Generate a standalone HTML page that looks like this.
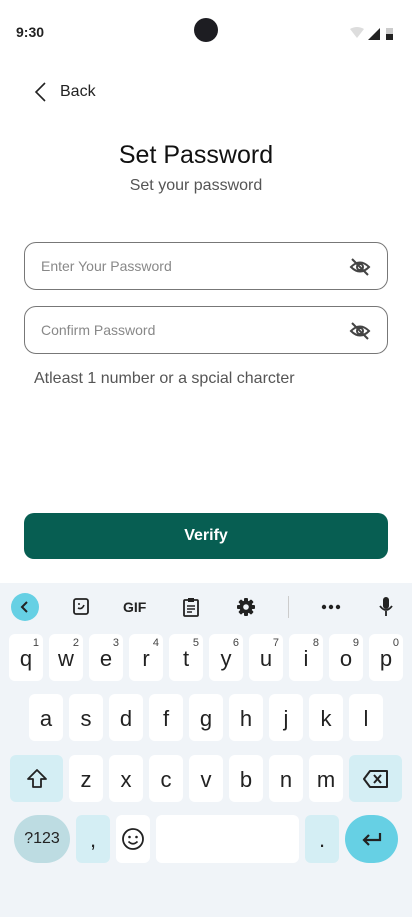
<!DOCTYPE html>
<html><head><meta charset="utf-8"><style>
*{margin:0;padding:0;box-sizing:border-box}
body{width:412px;height:917px;background:#fff;font-family:"Liberation Sans",sans-serif;position:relative;overflow:hidden;color:#111}
.a{position:absolute}
.field{position:absolute;left:24px;width:364px;height:48px;border:1px solid #777;border-radius:12px}
.field span{position:absolute;left:16px;top:15px;font-size:14px;color:#888}
.field svg{position:absolute;right:16px;top:13px}
.kb{position:absolute;left:0;top:583px;width:412px;height:334px;background:#f0f4f8}
.k{position:absolute;width:34px;height:47px;background:#fff;border-radius:6px;font-size:22px;text-align:center;line-height:49px;color:#222}
.k sup{position:absolute;right:4px;top:-15px;font-size:11px;color:#444}
.lb{background:#d4eef4}
</style></head><body>
<div class="a" style="left:16px;top:24px;font-size:14px;font-weight:bold;color:#222">9:30</div>
<div class="a" style="left:194px;top:18px;width:24px;height:24px;border-radius:50%;background:#1d1d22"></div>
<svg class="a" style="left:348px;top:26px" width="50" height="16"><path d="M2 3 Q9 -1 16 3 L9 12Z" fill="#ddd"/><path d="M20 14 L32 2 L32 14Z" fill="#222"/><rect x="38" y="2" width="7" height="12" fill="#ccc"/><rect x="38" y="8" width="7" height="6" fill="#222"/></svg>
<svg class="a" style="left:33px;top:81px" width="14" height="22"><path d="M12 2 L3 11 L12 20" stroke="#222" stroke-width="1.6" fill="none"/></svg>
<div class="a" style="left:60px;top:83px;font-size:16px;color:#222">Back</div>
<div class="a" style="left:0;width:392px;top:141px;text-align:center;font-size:25px;color:#111">Set Password</div>
<div class="a" style="left:0;width:392px;top:177px;text-align:center;font-size:16px;color:#555">Set your password</div>
<div class="field" style="top:242px"><span>Enter Your Password</span>
<svg width="22" height="22" viewBox="0 0 22 22"><path d="M2 11 Q11 2 20 11 Q11 20 2 11Z" stroke="#444" stroke-width="2" fill="none"/><circle cx="11" cy="11" r="3" stroke="#444" stroke-width="2" fill="none"/><path d="M3 3 L19 19" stroke="#444" stroke-width="2"/></svg></div>
<div class="field" style="top:306px"><span>Confirm Password</span>
<svg width="22" height="22" viewBox="0 0 22 22"><path d="M2 11 Q11 2 20 11 Q11 20 2 11Z" stroke="#444" stroke-width="2" fill="none"/><circle cx="11" cy="11" r="3" stroke="#444" stroke-width="2" fill="none"/><path d="M3 3 L19 19" stroke="#444" stroke-width="2"/></svg></div>
<div class="a" style="left:34px;top:370px;font-size:16px;color:#555">Atleast 1 number or a spcial charcter</div>
<div class="a" style="left:24px;top:513px;width:364px;height:46px;border-radius:10px;background:#075e52;color:#fff;font-size:16px;font-weight:bold;text-align:center;line-height:46px">Verify</div>
<div class="kb"></div>
<div class="a" style="left:11px;top:593px;width:28px;height:28px;border-radius:50%;background:#66d0e4"></div>
<svg class="a" style="left:19px;top:600px" width="12" height="14"><path d="M8 2 L3 7 L8 12" stroke="#222" stroke-width="2" fill="none"/></svg>
<svg class="a" style="left:72px;top:597px" width="18" height="20"><rect x="2" y="2" width="14" height="15" rx="2" stroke="#222" stroke-width="1.8" fill="none"/><circle cx="7" cy="7" r="1" fill="#222"/><path d="M6 11 Q10 13 12 8" stroke="#222" stroke-width="1.6" fill="none"/></svg>
<div class="a" style="left:123px;top:599px;font-size:14px;font-weight:bold;color:#222">GIF</div>
<svg class="a" style="left:182px;top:596px" width="18" height="22"><rect x="2" y="4" width="14" height="16" rx="1" stroke="#222" stroke-width="1.8" fill="none"/><rect x="6" y="2" width="6" height="4" fill="#222"/><path d="M5 10H13M5 13H13M5 16H10" stroke="#222" stroke-width="1.4"/></svg>
<svg class="a" style="left:236px;top:597px" width="20" height="20" viewBox="0 0 20 20"><g fill="#222"><circle cx="10" cy="10" r="6.5"/><rect x="8" y="1" width="4" height="18" rx="1"/><rect x="1" y="8" width="18" height="4" rx="1"/><rect x="8" y="1" width="4" height="18" rx="1" transform="rotate(45 10 10)"/><rect x="8" y="1" width="4" height="18" rx="1" transform="rotate(-45 10 10)"/></g><circle cx="10" cy="10" r="2.8" fill="#f0f4f8"/></svg>
<div class="a" style="left:288px;top:596px;width:1px;height:22px;background:#ccc"></div>
<svg class="a" style="left:321px;top:604px" width="20" height="6"><circle cx="3" cy="3" r="2.2" fill="#222"/><circle cx="10" cy="3" r="2.2" fill="#222"/><circle cx="17" cy="3" r="2.2" fill="#222"/></svg>
<svg class="a" style="left:378px;top:596px" width="16" height="22"><rect x="5" y="1" width="6" height="12" rx="3" fill="#222"/><path d="M2 10 Q8 18 14 10M8 15V20" stroke="#222" stroke-width="1.8" fill="none"/></svg>
<div class="k" style="left:9px;top:634px">q<sup>1</sup></div>
<div class="k" style="left:49px;top:634px">w<sup>2</sup></div>
<div class="k" style="left:89px;top:634px">e<sup>3</sup></div>
<div class="k" style="left:129px;top:634px">r<sup>4</sup></div>
<div class="k" style="left:169px;top:634px">t<sup>5</sup></div>
<div class="k" style="left:209px;top:634px">y<sup>6</sup></div>
<div class="k" style="left:249px;top:634px">u<sup>7</sup></div>
<div class="k" style="left:289px;top:634px">i<sup>8</sup></div>
<div class="k" style="left:329px;top:634px">o<sup>9</sup></div>
<div class="k" style="left:369px;top:634px">p<sup>0</sup></div>
<div class="k" style="left:29px;top:694px">a</div>
<div class="k" style="left:69px;top:694px">s</div>
<div class="k" style="left:109px;top:694px">d</div>
<div class="k" style="left:149px;top:694px">f</div>
<div class="k" style="left:189px;top:694px">g</div>
<div class="k" style="left:229px;top:694px">h</div>
<div class="k" style="left:269px;top:694px">j</div>
<div class="k" style="left:309px;top:694px">k</div>
<div class="k" style="left:349px;top:694px">l</div>
<div class="k lb" style="left:10px;top:755px;width:53px"><svg width="24" height="24" viewBox="0 0 24 24" style="margin-top:12px"><path d="M12 3 L21 12 H16 V20 H8 V12 H3Z" stroke="#222" stroke-width="1.8" fill="none" stroke-linejoin="round"/></svg></div>
<div class="k" style="left:69px;top:755px">z</div>
<div class="k" style="left:109px;top:755px">x</div>
<div class="k" style="left:149px;top:755px">c</div>
<div class="k" style="left:189px;top:755px">v</div>
<div class="k" style="left:229px;top:755px">b</div>
<div class="k" style="left:269px;top:755px">n</div>
<div class="k" style="left:309px;top:755px">m</div>
<div class="k lb" style="left:349px;top:755px;width:53px"><svg width="28" height="22" viewBox="0 0 28 22" style="margin-top:13px"><path d="M8 3 H25 V19 H8 L2 11Z" stroke="#222" stroke-width="2" fill="none" stroke-linejoin="round"/><path d="M12 7 L19 15 M19 7 L12 15" stroke="#222" stroke-width="2"/></svg></div>
<div class="k" style="left:14px;top:815px;width:56px;height:48px;border-radius:24px;background:#bddce2;font-size:16px;line-height:48px">?123</div>
<div class="k lb" style="left:76px;top:815px;height:48px">,</div>
<div class="k" style="left:116px;top:815px;height:48px"><svg width="24" height="24" viewBox="0 0 24 24" style="margin-top:12px"><circle cx="12" cy="12" r="10" stroke="#222" stroke-width="1.8" fill="none"/><circle cx="8.5" cy="10" r="1.3" fill="#222"/><circle cx="15.5" cy="10" r="1.3" fill="#222"/><path d="M7.5 14.5 Q12 19 16.5 14.5" stroke="#222" stroke-width="1.6" fill="none"/></svg></div>
<div class="k" style="left:156px;top:815px;width:143px;height:48px"></div>
<div class="k lb" style="left:305px;top:815px;height:48px">.</div>
<div class="k" style="left:345px;top:815px;width:53px;height:48px;border-radius:24px;background:#66d0e4"><svg width="24" height="20" viewBox="0 0 24 20" style="margin-top:14px"><path d="M20 4 V11 H4 M9 6 L4 11 L9 16" stroke="#222" stroke-width="2.2" fill="none"/></svg></div>
</body></html>
